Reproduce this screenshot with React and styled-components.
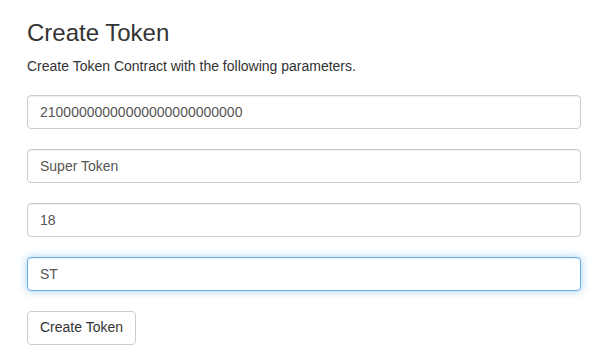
import styled, { createGlobalStyle } from 'styled-components';

const GlobalStyle = createGlobalStyle`
  * {
    box-sizing: border-box;
  }

  body {
    margin: 0;
    background: #fff;
    color: #333;
    font-family: "Liberation Sans", Arial, sans-serif;
    font-size: 14px;
    line-height: 1.42857;
  }
`;

const fields = [
  { value: '21000000000000000000000000', focused: false },
  { value: 'Super Token', focused: false },
  { value: '18', focused: false },
  { value: 'ST', focused: true },
];

export default function App() {
  return (
    <>
      <GlobalStyle />
      <Page>
        <Title>Create Token</Title>
        <Lead>Create Token Contract with the following parameters.</Lead>
        <Form onSubmit={(e) => e.preventDefault()}>
          {fields.map((field, i) => (
            <Input key={i} type='text' defaultValue={field.value} $focused={field.focused} />
          ))}
          <Button type='submit'>Create Token</Button>
        </Form>
      </Page>
    </>
  );
}

const Page = styled.div`
  padding: 20px 28px 0 27px;
`;

const Title = styled.h3`
  margin: 0 0 10px;
  font-size: 24px;
  font-weight: 500;
  line-height: 26px;
  color: #333;
`;

const Lead = styled.p`
  margin: 0 0 9px;
  font-size: 14px;
  line-height: 20px;
`;

const Form = styled.form`
  display: flex;
  flex-direction: column;
  align-items: flex-start;
  gap: 20px;
  padding-top: 10px;
`;

const Input = styled.input`
  display: block;
  width: 100%;
  height: 34px;
  padding: 6px 12px;
  font-family: inherit;
  font-size: 14px;
  line-height: 1.42857;
  color: #555;
  background-color: #fff;
  border: 1px solid ${({ $focused }) => ($focused ? '#66afe9' : '#ccc')};
  border-radius: 4px;
  box-shadow: ${({ $focused }) =>
    $focused
      ? 'inset 0 1px 1px rgba(0,0,0,.075), 0 0 8px rgba(102,175,233,.6)'
      : 'inset 0 1px 1px rgba(0,0,0,.075)'};
  outline: none;
`;

const Button = styled.button`
  height: 34px;
  padding: 6px 12px;
  font-family: inherit;
  font-size: 14px;
  line-height: 1.42857;
  color: #333;
  background-color: #fff;
  border: 1px solid #ccc;
  border-radius: 4px;
  cursor: pointer;
`;
